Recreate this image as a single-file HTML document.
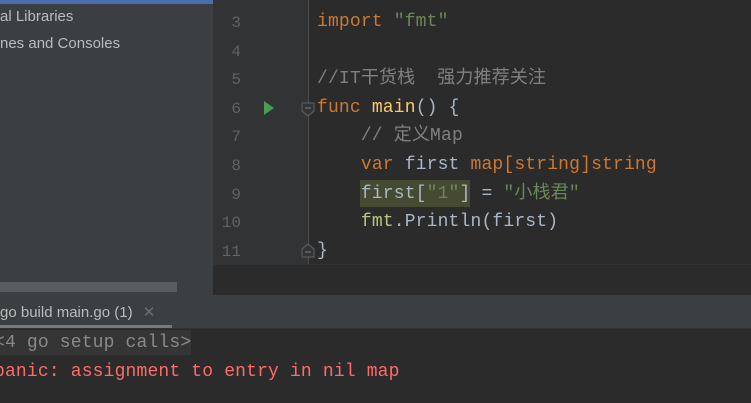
<html><head><style>
body{margin:0;width:751px;height:403px;overflow:hidden;background:#2b2b2b;position:relative;font-family:"Liberation Sans",sans-serif}
div{position:absolute}
.m{font-family:"Liberation Mono","Noto Sans CJK SC",monospace;font-size:18px;letter-spacing:.16px;white-space:pre;line-height:24px}
.ln{left:213px;width:28px;text-align:right;color:#606366;font-size:16px;font-family:"Liberation Mono",monospace;line-height:24px}
.c{left:317px;color:#a9b7c6}
.k{color:#cc7832}.s{color:#6a8759}.g{color:#808080}
</style></head><body>
<div style="left:0;top:0;width:213px;height:295px;background:#3c3f41"></div>
<div style="left:0;top:0;width:213px;height:4px;background:#4b6eaf"></div>
<div style="left:0;top:8px;color:#bbbbbb;font-size:15px">al Libraries</div>
<div style="left:0;top:35px;color:#bbbbbb;font-size:15px">nes and Consoles</div>
<div style="left:0;top:282px;width:177px;height:10px;background:#5a5d5f"></div>
<div style="left:213px;top:0;width:95px;height:265px;background:#313335"></div>
<div style="left:308px;top:0;width:1px;height:265px;background:#4a4a4a"></div>
<div style="left:215px;top:264px;width:536px;height:31px;background:#2b2b2b;border-top:1px solid #323232"></div>
<div class="ln" style="top:11px">3</div>
<div class="ln" style="top:40px">4</div>
<div class="ln" style="top:68px">5</div>
<div class="ln" style="top:97px">6</div>
<div class="ln" style="top:125px">7</div>
<div class="ln" style="top:154px">8</div>
<div class="ln" style="top:183px">9</div>
<div class="ln" style="top:211px">10</div>
<div class="ln" style="top:240px">11</div>
<svg style="position:absolute;left:263px;top:101px" width="12" height="14"><path d="M1 0L11 7L1 14Z" fill="#499c54"/></svg>
<svg style="position:absolute;left:301px;top:102px" width="14" height="16"><path d="M1 1H13V9L7 14L1 9Z" fill="#313335" stroke="#606366"/><path d="M4 6H10" stroke="#808080"/></svg>
<svg style="position:absolute;left:301px;top:242px" width="14" height="16"><path d="M1 15H13V7L7 2L1 7Z" fill="#313335" stroke="#606366"/><path d="M4 10H10" stroke="#808080"/></svg>
<div class="m c" style="top:10px"><span class="k">import</span> <span class="s">"fmt"</span></div>
<div class="m c g" style="top:67px">//IT干货栈  强力推荐关注</div>
<div class="m c" style="top:96px"><span class="k">func</span> <span style="color:#ffc66d">main</span>() {</div>
<div class="m c g" style="top:124px">    // 定义Map</div>
<div class="m c" style="top:153px">    <span class="k">var</span> first <span class="k">map[string]string</span></div>
<div style="left:360px;top:180px;width:110px;height:27px;background:#474a32"></div>
<div class="m c" style="top:182px">    first[<span class="s">"1"</span>] = <span class="s">"小栈君"</span></div>
<div class="m c" style="top:210px">    <span style="color:#b5c77a">fmt</span>.Println(first)</div>
<div class="m c" style="top:239px">}</div>
<div style="left:0;top:295px;width:751px;height:33px;background:#3c3f41;border-bottom:1px solid #323232"></div>
<div style="left:0;top:303px;color:#bbbbbb;font-size:15px">go build main.go (1) <span style="color:#6e6e6e;margin-left:6px">✕</span></div>
<div style="left:0;top:325px;width:172px;height:3px;background:#747a80"></div>
<div style="left:0;top:330px;width:191px;height:25px;background:#353535"></div>
<div class="m" style="left:-6px;top:331px;color:#8a8a8a">&lt;4 go setup calls&gt;</div>
<div class="m" style="left:-6px;top:360px;color:#ff6b68">panic: assignment to entry in nil map</div>
</body></html>
